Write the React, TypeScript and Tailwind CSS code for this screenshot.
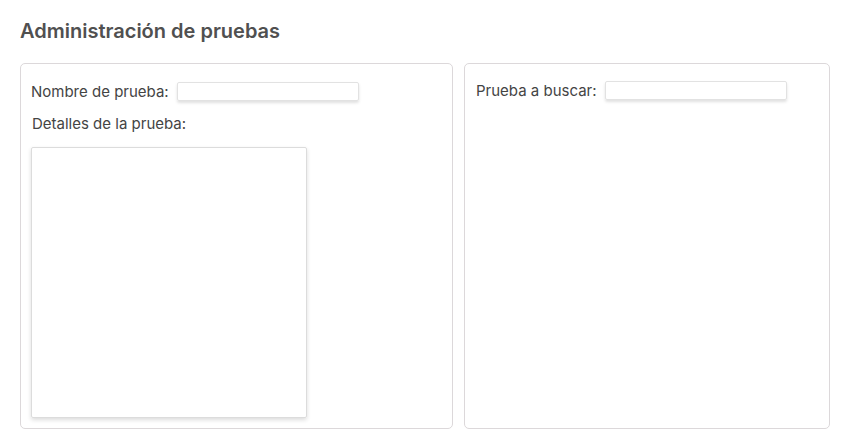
import React from "react";

export default function App() {
  return (
    <div className="w-[848px] h-[448px] bg-white px-5 pt-[18px] font-['Inter',sans-serif] text-[#444]">
      {/* Título */}
      <h1 className="text-[20px] leading-[26px] font-semibold text-[#505050]">
        Administración de pruebas
      </h1>

      <div className="flex gap-[11px] mt-[19px]">
        {/* Panel de alta */}
        <div className="w-[433px] h-[366px] shrink-0 border border-[#dcd8da] rounded-[5px] px-[10px] pt-[18px] pb-[10px] flex flex-col">
          <div className="flex items-center h-[19px]">
            <label className="text-[15px] leading-[19px] mr-[8px]">Nombre de prueba:</label>
            <input
              type="text"
              className="w-[182px] h-[19px] border border-[#e2e2e2] rounded-[2px] shadow-[0_2px_3px_rgba(0,0,0,0.12)] outline-none"
            />
          </div>
          <label className="text-[15px] leading-[19px] mt-[13px] ml-px">Detalles de la prueba:</label>
          <textarea className="mt-[14px] w-[276px] h-[271px] border border-[#dcdcdc] rounded-[2px] shadow-[0_2px_4px_rgba(0,0,0,0.14)] resize-none outline-none" />
        </div>

        {/* Panel de búsqueda */}
        <div className="w-[366px] h-[366px] shrink-0 border border-[#dcd8da] rounded-[5px] px-[11px] pt-[17px]">
          <div className="flex items-center h-[19px]">
            <label className="text-[15px] leading-[19px] mr-[8px]">Prueba a buscar:</label>
            <input
              type="text"
              className="w-[182px] h-[19px] border border-[#e2e2e2] rounded-[2px] shadow-[0_2px_3px_rgba(0,0,0,0.12)] outline-none"
            />
          </div>
        </div>
      </div>
    </div>
  );
}
